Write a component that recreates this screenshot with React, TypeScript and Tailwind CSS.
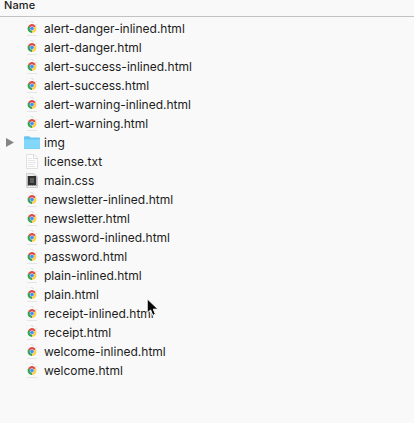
type Kind = 'html' | 'folder' | 'txt' | 'css';

const files: { name: string; kind: Kind }[] = [
  { name: 'alert-danger-inlined.html', kind: 'html' },
  { name: 'alert-danger.html', kind: 'html' },
  { name: 'alert-success-inlined.html', kind: 'html' },
  { name: 'alert-success.html', kind: 'html' },
  { name: 'alert-warning-inlined.html', kind: 'html' },
  { name: 'alert-warning.html', kind: 'html' },
  { name: 'img', kind: 'folder' },
  { name: 'license.txt', kind: 'txt' },
  { name: 'main.css', kind: 'css' },
  { name: 'newsletter-inlined.html', kind: 'html' },
  { name: 'newsletter.html', kind: 'html' },
  { name: 'password-inlined.html', kind: 'html' },
  { name: 'password.html', kind: 'html' },
  { name: 'plain-inlined.html', kind: 'html' },
  { name: 'plain.html', kind: 'html' },
  { name: 'receipt-inlined.html', kind: 'html' },
  { name: 'receipt.html', kind: 'html' },
  { name: 'welcome-inlined.html', kind: 'html' },
  { name: 'welcome.html', kind: 'html' },
];

function ChromeDocument() {
  return (
    <svg className="h-[19px] w-4" viewBox="0 0 16 19">
      <path d="M2.5 2.5h1M6 2.5h3M8 3.5h2M11.5 5.5h2" stroke="#e6e6e6" fill="none" />
      <path d="M3 16.5h10" stroke="#e5e5e5" />
      <path d="M8 9.5 4.2 7.3A4.4 4.4 0 0 1 11.8 7.3Z" fill="#e2473b" />
      <path d="M8 9.5 11.8 7.3A4.4 4.4 0 0 1 8 13.9Z" fill="#fbd043" />
      <path d="M8 9.5V13.9A4.4 4.4 0 0 1 4.2 7.3Z" fill="#35a353" />
      <circle cx="8" cy="9.5" r="2.2" fill="#dce8fb" />
      <circle cx="8" cy="9.5" r="1.8" fill="#4b8df0" />
    </svg>
  );
}

function Folder() {
  return (
    <svg className="h-[19px] w-4" viewBox="0 0 16 19">
      <path d="M0 4.3Q0 3.3 1 3.3H5.2L6.5 4.5H15Q16 4.5 16 5.5V15Q16 16 15 16H1Q0 16 0 15Z" fill="#68c6ee" />
      <path d="M0 6.5H16V15Q16 15.6 15.2 15.6H.8Q0 15.6 0 15Z" fill="#83d7fa" />
    </svg>
  );
}

function TextDocument() {
  return (
    <svg className="h-[19px] w-4" viewBox="0 0 16 19">
      <path d="M2.5 2.5H10L13.5 6V16.5H2.5Z" fill="#fdfdfd" stroke="#e0e0e0" />
      <path d="M9.5 2.5V6.5H13.5" fill="none" stroke="#dcdcdc" />
      <path d="M4 6.5H8M4 8.5H11M4 10.5H12M4 12.5H10M4 14.5H11" stroke="#e6e6e6" />
    </svg>
  );
}

function StyleDocument() {
  return (
    <svg className="h-[19px] w-4" viewBox="0 0 16 19">
      <path d="M2.5 2.5H10L13.5 6V16.5H2.5Z" fill="#ececec" stroke="#d0d0d0" />
      <path d="M9.5 2.5V4.5H13" fill="none" stroke="#d8d8d8" />
      <rect x="3" y="5" width="10" height="10" fill="#b4b4b4" />
      <rect x="4" y="5" width="8" height="9" fill="#303030" />
      <rect x="6" y="7" width="4" height="5" fill="#5c5c5c" />
      <path d="M4 14.5H12" stroke="#8a8a8a" strokeDasharray="1 1" />
    </svg>
  );
}

const icons = { html: ChromeDocument, folder: Folder, txt: TextDocument, css: StyleDocument };

export default function App() {
  return (
    <div className="relative h-[423px] w-[414px] overflow-hidden bg-[#f9f9f9] font-[Inter,sans-serif] text-[#1c1c1c]">
      <header className="h-[17px] border-b border-[#c3c3c3] pl-1 text-[11px] leading-[11px] font-medium tracking-[0.1px]">
        Name
      </header>
      <ul className="pt-0.5">
        {files.map(({ name, kind }) => {
          const Icon = icons[kind];
          return (
            <li key={name} className="flex h-[19px] items-center">
              <div className="flex w-6 shrink-0 pl-1.5">
                {kind === 'folder' && (
                  <svg className="h-[9px] w-2" viewBox="0 0 8 9">
                    <path d="M0 0 8 4.5 0 9Z" fill="#858585" />
                  </svg>
                )}
              </div>
              <Icon />
              <span className="ml-1 text-[12px] leading-[19px] whitespace-nowrap">{name}</span>
            </li>
          );
        })}
      </ul>
      <svg className="absolute top-[298px] left-[146px] h-[19px] w-[14px]" viewBox="0 0 14 19">
        <path d="M1.2 .8V15L4.6 12 6.8 17.4 9.4 16.2 7.3 11.2H12Z" fill="#080808" stroke="#fff" strokeWidth="1" />
      </svg>
    </div>
  );
}
